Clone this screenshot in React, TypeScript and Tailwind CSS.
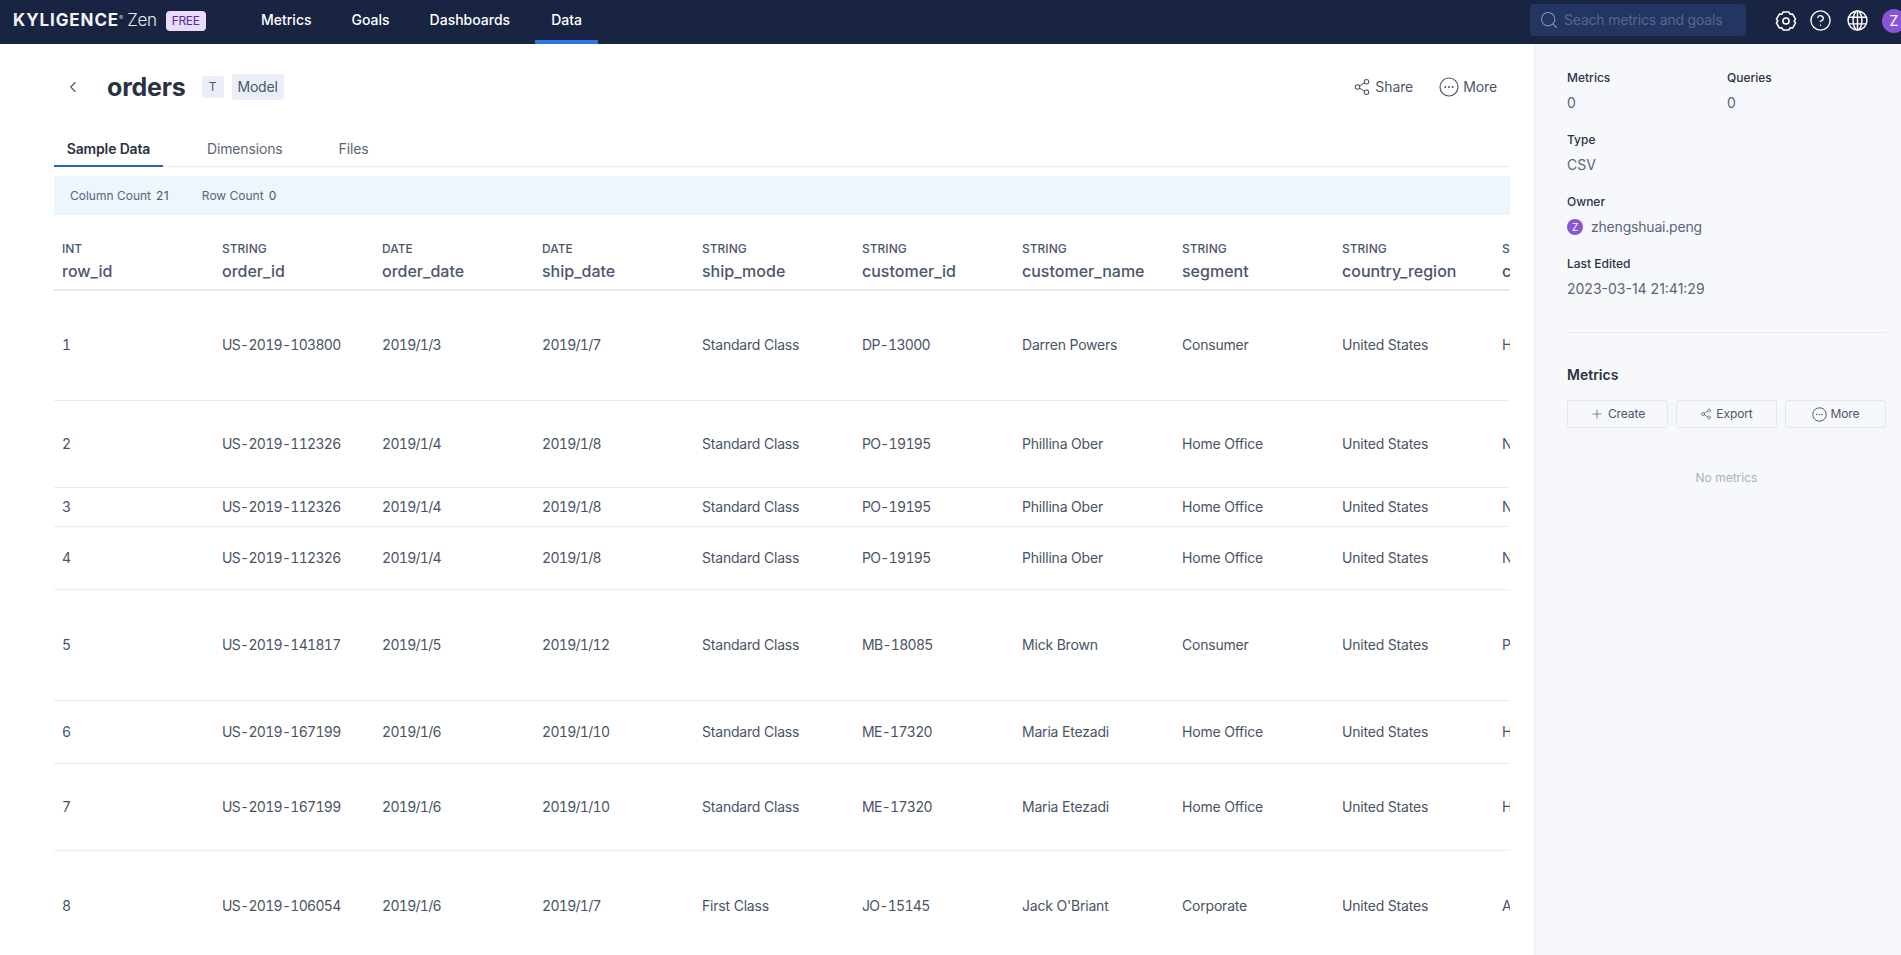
import { ChevronLeft, CircleHelp, Plus, Search, Share2 } from 'lucide-react'

const columns = [
  { type: 'INT', name: 'row_id' },
  { type: 'STRING', name: 'order_id' },
  { type: 'DATE', name: 'order_date' },
  { type: 'DATE', name: 'ship_date' },
  { type: 'STRING', name: 'ship_mode' },
  { type: 'STRING', name: 'customer_id' },
  { type: 'STRING', name: 'customer_name' },
  { type: 'STRING', name: 'segment' },
  { type: 'STRING', name: 'country_region' },
  { type: 'STRING', name: 'city' },
]

const rows = [
  { height: 'h-[110px]', cells: ['1', 'US-2019-103800', '2019/1/3', '2019/1/7', 'Standard Class', 'DP-13000', 'Darren Powers', 'Consumer', 'United States', 'Henderson'] },
  { height: 'h-[87px]', cells: ['2', 'US-2019-112326', '2019/1/4', '2019/1/8', 'Standard Class', 'PO-19195', 'Phillina Ober', 'Home Office', 'United States', 'New York City'] },
  { height: 'h-[39px]', cells: ['3', 'US-2019-112326', '2019/1/4', '2019/1/8', 'Standard Class', 'PO-19195', 'Phillina Ober', 'Home Office', 'United States', 'New York City'] },
  { height: 'h-[63px]', cells: ['4', 'US-2019-112326', '2019/1/4', '2019/1/8', 'Standard Class', 'PO-19195', 'Phillina Ober', 'Home Office', 'United States', 'New York City'] },
  { height: 'h-[111px]', cells: ['5', 'US-2019-141817', '2019/1/5', '2019/1/12', 'Standard Class', 'MB-18085', 'Mick Brown', 'Consumer', 'United States', 'Philadelphia'] },
  { height: 'h-[63px]', cells: ['6', 'US-2019-167199', '2019/1/6', '2019/1/10', 'Standard Class', 'ME-17320', 'Maria Etezadi', 'Home Office', 'United States', 'Houston'] },
  { height: 'h-[87px]', cells: ['7', 'US-2019-167199', '2019/1/6', '2019/1/10', 'Standard Class', 'ME-17320', 'Maria Etezadi', 'Home Office', 'United States', 'Houston'] },
  { height: 'h-[111px]', cells: ['8', 'US-2019-106054', '2019/1/6', '2019/1/7', 'First Class', 'JO-15145', "Jack O'Briant", 'Corporate', 'United States', 'Athens'] },
]

function GearIcon() {
  return (
    <svg width="22" height="22" viewBox="0 0 20 20" fill="none" stroke="currentColor" strokeWidth="1.4" strokeLinejoin="round" className="shrink-0">
      <path d="M7.3 1.8h5.4l1 2.1 2.3-.2 2.7 4.6-1.3 1.7 1.3 1.8-2.7 4.6-2.3-.3-1 2.1H7.3l-1-2.1-2.3.3-2.7-4.6L2.6 10 1.3 8.3 4 3.7l2.3.2z" />
      <circle cx="10" cy="10" r="2.8" />
    </svg>
  )
}

function GlobeIcon() {
  return (
    <svg width="21" height="21" viewBox="0 0 20 20" fill="none" stroke="currentColor" strokeWidth="1.4" className="ml-[15px] shrink-0">
      <circle cx="10" cy="10" r="9" />
      <ellipse cx="10" cy="10" rx="4.2" ry="9" />
      <path d="M1.8 6.8h16.4M1.8 13.2h16.4M10 1v18" />
    </svg>
  )
}

function DotsIcon({ size, stroke }: { size: number; stroke: number }) {
  return (
    <svg width={size} height={size} viewBox="0 0 20 20" fill="none" stroke="currentColor" strokeWidth={stroke}>
      <circle cx="10" cy="10" r="9" />
      <g fill="currentColor" stroke="none">
        <circle cx="6.4" cy="10" r="1" />
        <circle cx="10" cy="10" r="1" />
        <circle cx="13.6" cy="10" r="1" />
      </g>
    </svg>
  )
}

function Info({ label, children }: { label: string; children: React.ReactNode }) {
  return (
    <div className="h-[62px]">
      <div className="text-xs leading-[20px] font-medium text-[#2c3345]">{label}</div>
      <div className="mt-[5px] text-sm leading-[20px] text-[#5c6578]">{children}</div>
    </div>
  )
}

function SideButton({ icon, label }: { icon: React.ReactNode; label: string }) {
  return (
    <button className="flex h-[28px] flex-1 items-center justify-center gap-[4px] rounded-[3px] border border-[#e3e7ee] text-xs tracking-[-0.1px] text-[#4d566a]">
      {icon}
      {label}
    </button>
  )
}

export default function App() {
  return (
    <div className="flex h-screen flex-col overflow-hidden bg-white font-['Inter',sans-serif]">
      {/* Top nav */}
      <header className="flex h-[44px] shrink-0 items-center overflow-hidden bg-[#182442] pl-[13px]">
        <div className="mb-[2px] flex w-[222px] shrink-0 items-center">
          <span className="text-[17px] font-bold tracking-[0.9px] text-[#f1f3f7]">KYLIGENCE</span>
          <span className="mb-[7px] text-[6px] text-[#c9ced9]">®</span>
          <span className="ml-[4px] text-[17px] font-light tracking-[-0.3px] text-[#e6e9ef]">Zen</span>
          <span className="ml-[9px] rounded-[4px] bg-[#e9dcfb] px-[6px] text-xs leading-[20px] tracking-[-0.3px] text-[#5b2a93]">FREE</span>
        </div>
        <nav className="flex h-full text-sm font-medium text-white">
          <a className="ml-[26px] mr-[40px] flex h-full items-center border-b-[4px] border-transparent">Metrics</a>
          <a className="mr-[40px] flex h-full items-center border-b-[4px] border-transparent">Goals</a>
          <a className="mr-[25px] flex h-full items-center border-b-[4px] border-transparent">Dashboards</a>
          <a className="flex h-full w-[63px] items-center justify-center border-b-[4px] border-[#2f74e0]">Data</a>
        </nav>
        <div className="mb-[4px] ml-auto flex h-[32px] w-[216px] items-center gap-[5px] rounded-[4px] bg-[#243562] pl-[9px] text-sm tracking-[-0.2px] text-[#56668f]">
          <Search size={20} strokeWidth={1.3} className="text-[#8793b0]" />
          Seach metrics and goals
        </div>
        <div className="mb-[3px] ml-[29px] flex w-[126px] shrink-0 items-center text-white">
          <GearIcon />
          <CircleHelp size={23} strokeWidth={1.4} className="ml-[12px] shrink-0" />
          <GlobeIcon />
          <span className="ml-[14px] flex size-[24px] shrink-0 items-center justify-center rounded-full bg-[#8b54d6] text-sm">Z</span>
        </div>
      </header>

      <div className="flex min-h-0 flex-1">
        {/* Main */}
        <main className="min-w-0 flex-1 pl-[54px] pr-[24px]">
          <div className="flex h-[86px] items-center text-[#2c3345]">
            <ChevronLeft size={18} strokeWidth={1.5} className="ml-[10px] text-[#4d566a]" />
            <h1 className="ml-[25px] pt-[2px] text-[25px] font-bold tracking-[-0.2px] text-[#2a3142]">orders</h1>
            <span className="ml-[16px] flex h-[22px] w-[22px] items-center justify-center rounded-[3px] bg-[#eaeef8] text-xs text-[#4d566a]">T</span>
            <span className="ml-[8px] flex h-[26px] w-[52px] items-center justify-center rounded-[3px] bg-[#eaeef8] text-sm tracking-[-0.2px] text-[#4d566a]">Model</span>
            <div className="ml-auto flex items-center pr-[13px] text-sm tracking-[-0.1px] text-[#4d566a]">
              <Share2 size={18} strokeWidth={1.4} />
              <span className="ml-[4px]">Share</span>
              <span className="ml-[26px]">
                <DotsIcon size={20} stroke={1.2} />
              </span>
              <span className="ml-[4px]">More</span>
            </div>
          </div>

          <div className="flex h-[37px] border-b-[1.5px] border-[#e8eaee] text-sm tracking-[-0.15px]">
            <a className="flex h-[37px] w-[109px] items-center justify-center border-b-[2px] border-[#2563d0] pt-[2px] font-semibold text-[#2a3142]">Sample Data</a>
            <a className="ml-[44px] flex h-[35px] items-center pt-[2px] text-[#5c6578]">Dimensions</a>
            <a className="ml-[56px] flex h-[35px] items-center pt-[2px] text-[#5c6578]">Files</a>
          </div>

          <div className="mt-[9px] flex h-[39px] items-center bg-[#edf5fd] pl-[16px] text-xs text-[#5c6578]">
            <span>Column Count</span>
            <span className="ml-[5px] tracking-[0.3px] text-[#4a5365]">21</span>
            <span className="ml-[33px]">Row Count</span>
            <span className="ml-[5px] text-[#4a5365]">0</span>
          </div>

          <div className="overflow-hidden">
            <table className="w-[1600px] table-fixed border-collapse">
              <thead>
                <tr className="h-[75px] border-b-2 border-[#e6e8ec]">
                  {columns.map((col) => (
                    <th key={col.name} className="w-[160px] px-[8px] pt-[25px] text-left align-top">
                      <div className="text-xs leading-[18px] font-medium text-[#4d566a]">{col.type}</div>
                      <div className="mt-[1px] text-base leading-[24px] font-medium text-[#4d566a]">{col.name}</div>
                    </th>
                  ))}
                </tr>
              </thead>
              <tbody>
                {rows.map((row) => (
                  <tr key={row.cells[0]} className={`${row.height} border-b border-[#e8edf4]`}>
                    {row.cells.map((cell, i) => (
                      <td key={i} className={`px-[8px] text-sm whitespace-nowrap text-[#4a5365] ${/\d/.test(cell) ? 'tracking-[-0.7px] tabular-nums' : 'tracking-[-0.2px]'}`}>
                        {cell}
                      </td>
                    ))}
                  </tr>
                ))}
              </tbody>
            </table>
          </div>
        </main>

        {/* Right panel */}
        <aside className="w-[367px] shrink-0 border-l border-[#e9ecf3] bg-[#f6f8fb] pl-[32px] pr-[15px] pt-[24px]">
          <div className="flex">
            <div className="w-[160px]">
              <Info label="Metrics">0</Info>
            </div>
            <Info label="Queries">0</Info>
          </div>
          <Info label="Type">CSV</Info>
          <Info label="Owner">
            <span className="flex items-center gap-[8px] tracking-[-0.2px]">
              <span className="flex size-[16px] items-center justify-center rounded-full bg-[#8b54d6] text-[10px] text-white">Z</span>
              zhengshuai.peng
            </span>
          </Info>
          <Info label="Last Edited">2023-03-14 21:41:29</Info>

          <div className="mt-[16px] border-t border-[#e6e9f0]" />
          <h2 className="mt-[32px] text-sm leading-[20px] font-semibold text-[#2a3142]">Metrics</h2>
          <div className="mt-[15px] flex gap-[8px]">
            <SideButton icon={<Plus size={14} strokeWidth={1.2} />} label="Create" />
            <SideButton icon={<Share2 size={12} strokeWidth={1.3} />} label="Export" />
            <SideButton icon={<DotsIcon size={15} stroke={1.3} />} label="More" />
          </div>
          <div className="mt-[40px] text-center text-xs leading-[20px] text-[#aab2c2]">No metrics</div>
        </aside>
      </div>
    </div>
  )
}
